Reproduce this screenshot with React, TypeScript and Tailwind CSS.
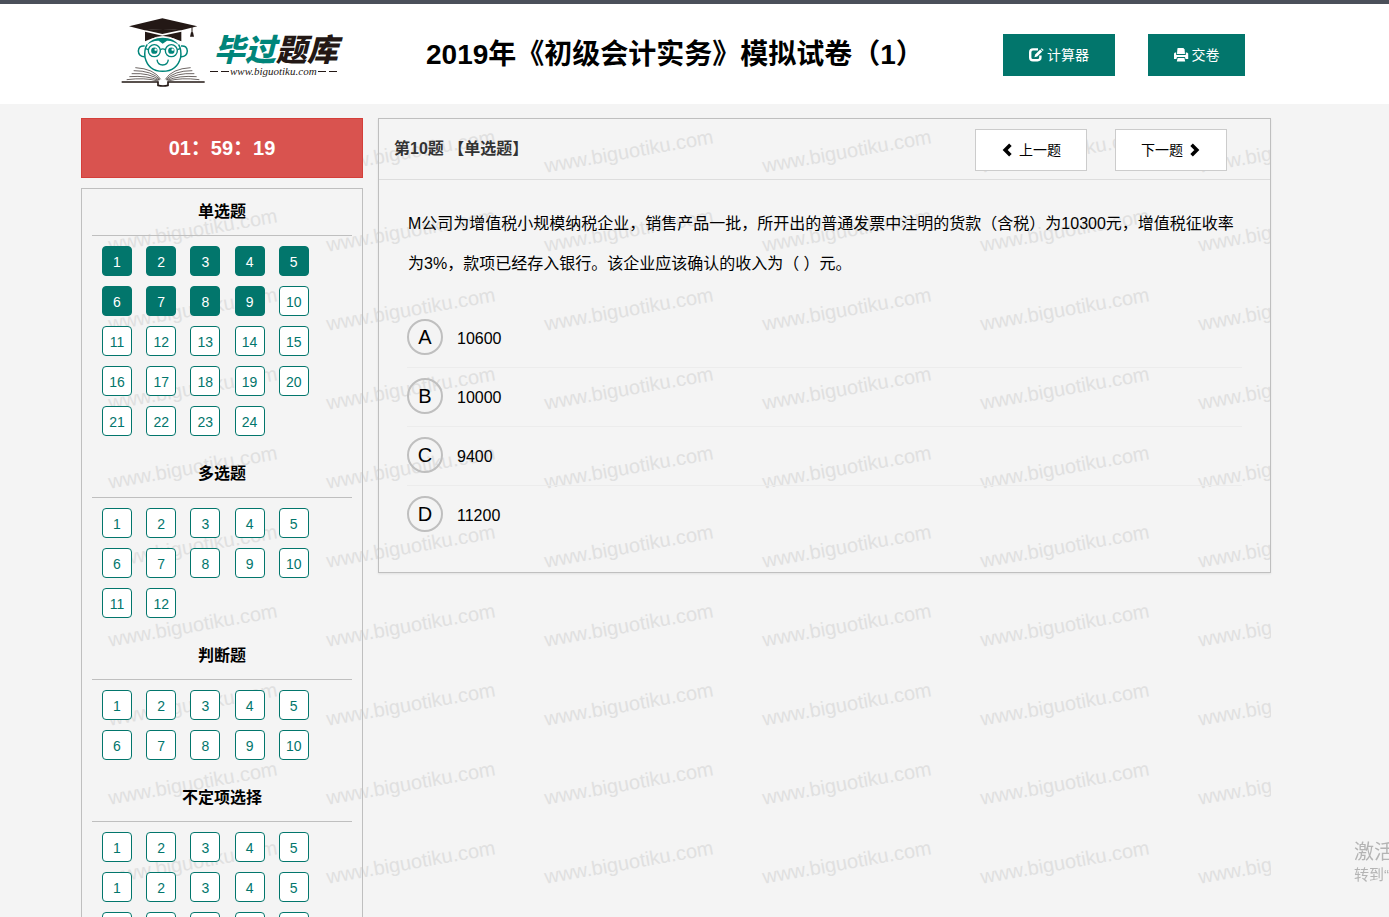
import React from "react";

type Section = { title: string; items: number[]; done: number };

const range = (n: number) => Array.from({ length: n }, (_, i) => i + 1);

const sections: Section[] = [
  { title: "单选题", items: range(24), done: 9 },
  { title: "多选题", items: range(12), done: 0 },
  { title: "判断题", items: range(10), done: 0 },
  { title: "不定项选择", items: [...range(5), ...range(5), ...range(5)], done: 0 },
];

const options = [
  { key: "A", text: "10600" },
  { key: "B", text: "10000" },
  { key: "C", text: "9400" },
  { key: "D", text: "11200" },
];

function Mascot() {
  return (
    <svg viewBox="30 51 258 213" className="h-[71px] w-[86px] shrink-0" fill="none" aria-hidden="true">
      <path d="M105 95 L157 107 L214 95 V124 Q186 110 158 110 Q130 110 105 124 Z" fill="#231815" />
      <path d="M122 119 Q158 100 197 119" stroke="#fff" strokeWidth="3" />
      <path d="M57 79 L157 55 L262 79 L214 91 Q158 84 104 91 Z" fill="#231815" />
      <path d="M104 90 Q158 84 214 90 L157 102 Z" fill="#231815" />
      <path d="M246 80 V99" stroke="#231815" strokeWidth="3" />
      <path d="M243 97 H249 L252 110 H240 Z" fill="#231815" />
      <path d="M111 134 Q102 150 105 172 Q115 214 158 214 Q201 214 212 172 Q215 150 206 134" stroke="#00857a" strokeWidth="4.5" />
      <path d="M108 137 Q124 113 158 113 Q192 113 209 137 Q188 121 171 122 L158 131 L146 122 Q127 121 108 137 Z" fill="#00857a" />
      <path d="M104 138 Q86 136 85 153 Q86 170 104 170 M213 138 Q231 136 232 153 Q231 170 213 170" stroke="#00857a" strokeWidth="4.5" />
      <circle cx="133" cy="152" r="18" stroke="#00857a" strokeWidth="4" />
      <circle cx="184" cy="152" r="18" stroke="#00857a" strokeWidth="4" />
      <path d="M151 149 Q158 144 166 149 M115 149 L105 145 M202 149 L212 145" stroke="#00857a" strokeWidth="4" />
      <circle cx="133" cy="152" r="9.5" fill="#00857a" />
      <circle cx="184" cy="152" r="9.5" fill="#00857a" />
      <circle cx="137" cy="149" r="3.5" fill="#fff" />
      <circle cx="188" cy="149" r="3.5" fill="#fff" />
      <path d="M141 179 Q143 195 158 195 Q173 195 175 179" stroke="#00857a" strokeWidth="4" />
      <g stroke="#231815" strokeWidth="2">
        <path d="M76 203 Q132 206 152 238" />
        <path d="M71 212 Q126 212 150 239" />
        <path d="M65 221 Q120 218 148 240" />
        <path d="M58 230 Q112 226 146 241" />
        <path d="M50 239 Q105 232 144 243" />
        <path d="M242 203 Q186 206 166 238" />
        <path d="M247 212 Q192 212 168 239" />
        <path d="M253 221 Q198 218 170 240" />
        <path d="M260 230 Q206 226 172 241" />
        <path d="M268 239 Q213 232 174 243" />
      </g>
      <path d="M35 246 H144 V256 Q159 260 174 256 V246 H284" stroke="#231815" strokeWidth="5" />
    </svg>
  );
}

function Logo() {
  return (
    <a href="#" aria-label="毕过题库" className="flex w-[222px] shrink-0 items-start gap-1">
      <Mascot />
      <span className="flex flex-col items-start pt-4">
        <span className="pl-1 text-[31px] leading-9 font-black whitespace-nowrap text-[#231815] italic">
          <span className="text-[#00857a]">毕过</span>题库
        </span>
        <span className="-mt-1 flex items-center gap-px font-['Liberation_Serif','Noto_Sans_CJK_SC',serif] text-[11px] leading-3 text-[#231815] italic">
          <span className="h-px w-2 bg-[#231815]" />
          <span className="ml-0.5 h-px w-2 bg-[#231815]" />
          www.biguotiku.com
          <span className="h-px w-2 bg-[#231815]" />
          <span className="ml-0.5 h-px w-2 bg-[#231815]" />
        </span>
      </span>
    </a>
  );
}

function EditIcon() {
  return (
    <svg viewBox="0 0 14 14" className="size-3.5 overflow-visible" fill="none" aria-hidden="true">
      <path d="M9 1.4 H4 Q1.2 1.4 1.2 4.2 V9.4 Q1.2 12.2 4 12.2 H8.6 Q11.4 12.2 11.4 9.4 V7.6" stroke="currentColor" strokeWidth="2.4" />
      <path d="M5.4 9.3 L6.2 6.5 L11.2 1.5 L13.2 3.5 L8.2 8.5 Z" fill="currentColor" />
      <path d="M11.8 0.9 L12.6 0.2 L14.6 2 L13.8 2.9 Z" fill="currentColor" />
    </svg>
  );
}

function PrintIcon() {
  return (
    <svg viewBox="0 0 14 14" className="size-3.5 overflow-visible" fill="none" aria-hidden="true">
      <path d="M4 0 H9.4 L10.6 1.5 L11 6 H3 L3.4 0.6 Z" fill="currentColor" />
      <path d="M0 5.4 L1 4.6 H2.2 V7 H11.8 V4.6 H13 L14.2 5.4 V11 H11.6 L11 9 H3 L2.4 11 H0 Z" fill="currentColor" />
      <path d="M3.6 10 H10.4 L11.2 13.4 H2.8 Z" fill="currentColor" />
    </svg>
  );
}

function Chevron({ dir }: { dir: "left" | "right" }) {
  return (
    <svg viewBox="0 0 14 14" className="size-3.5" fill="none" aria-hidden="true">
      <path
        d={dir === "left" ? "M9.4 1.8 L4.2 7 L9.4 12.2" : "M4.6 1.8 L9.8 7 L4.6 12.2"}
        stroke="currentColor"
        strokeWidth="3.6"
      />
    </svg>
  );
}

function Watermarks() {
  return (
    <div aria-hidden="true" className="pointer-events-none absolute inset-0 overflow-hidden">
      <div className="grid w-[1308px] auto-rows-[79px] grid-cols-6">
        {range(66).map((n) => (
          <span
            key={n}
            className="origin-bottom-left -rotate-10 self-end pl-[30px] text-[20px] leading-6 whitespace-nowrap text-[#e0e0e0]"
          >
            www.biguotiku.com
          </span>
        ))}
      </div>
    </div>
  );
}

export default function App() {
  return (
    <div className="min-h-screen overflow-hidden bg-[#f4f4f4] font-['Liberation_Sans','Noto_Sans_CJK_SC',sans-serif] text-black">
      <header className="border-t-4 border-[#4b505a] bg-white">
        <div className="flex h-[100px] items-start pr-36 pl-[120px] pt-[13px]">
          <Logo />
          <h1 className="min-w-0 flex-1 pt-[17px] pl-[84px] text-[28px] leading-[42px] font-bold whitespace-nowrap">
            2019年《初级会计实务》模拟试卷（1）
          </h1>
          <div className="flex shrink-0 gap-[33px] pt-[17px]">
            <button className="flex h-[42px] w-28 items-center justify-center gap-1 bg-[#02766c] text-[14px] text-white">
              <EditIcon />
              计算器
            </button>
            <button className="flex h-[42px] w-[97px] items-center justify-center gap-1 bg-[#02766c] text-[14px] text-white">
              <PrintIcon />
              交卷
            </button>
          </div>
        </div>
      </header>

      <div className="pr-[118px] pl-[81px]">
        <main className="relative">
          <Watermarks />
          <div className="relative flex items-start gap-[15px] pt-3.5">
            <aside className="flex w-[282px] shrink-0 flex-col gap-2.5">
              <div className="flex h-[60px] items-center justify-center border border-[#d43f3a] bg-[#d9534f] text-[20px] font-bold text-white">
                01：59：19
              </div>
              <nav className="border border-[#bfbfbf] px-2.5 pb-10">
                {sections.map((s) => (
                  <section key={s.title} className="pb-[5px]">
                    <h2 className="border-b border-[#bfbfbf] text-center text-[16px] leading-[46px] font-bold">{s.title}</h2>
                    <ul className="flex flex-wrap pt-2.5">
                      {s.items.map((n, i) => (
                        <li key={i} className="mb-2.5 w-[17%] pl-2.5">
                          <button
                            className={
                              i < s.done
                                ? "block size-[30px] rounded-[4px] border border-[#02766c] bg-[#02766c] pt-0.5 text-[14px] text-white"
                                : "block size-[30px] rounded-[4px] border border-[#02766c] bg-white pt-0.5 text-[14px] text-[#02766c]"
                            }
                          >
                            {n}
                          </button>
                        </li>
                      ))}
                    </ul>
                  </section>
                ))}
              </nav>
            </aside>

            <section className="min-w-0 flex-1 border border-[#bfbfbf] shadow-[0_1px_2px_rgba(0,0,0,0.08)]">
              <div className="flex items-start justify-between border-b border-[#ddd] pt-2.5 pb-2 pr-[43px] pl-[15px]">
                <h2 className="text-[16px] leading-10 font-bold text-[#333]">第10题 【单选题】</h2>
                <div className="flex gap-7">
                  <button className="flex h-[42px] w-28 items-center justify-center gap-1 border border-[#ccc] bg-white text-[14px]">
                    <Chevron dir="left" />
                    上一题
                  </button>
                  <button className="flex h-[42px] w-28 items-center justify-center gap-1 border border-[#ccc] bg-white text-[14px]">
                    下一题
                    <Chevron dir="right" />
                  </button>
                </div>
              </div>
              <div className="px-7 pt-6 pb-7">
                <p className="pr-1 pl-px text-[16px] leading-10">
                  M公司为增值税小规模纳税企业，销售产品一批，所开出的普通发票中注明的货款（含税）为10300元，增值税征收率为3%，款项已经存入银行。该企业应该确认的收入为（ ）元。
                </p>
                <ul className="pt-[25px]">
                  {options.map((o) => (
                    <li key={o.key} className="border-b border-[#ececec] last:border-b-0">
                      <button className="flex h-[58px] w-full items-center gap-3.5 pb-0.5 text-left text-[16px]">
                        <span className="flex size-9 items-center justify-center rounded-full border-2 border-[#bfbfbf] text-[20px]">
                          {o.key}
                        </span>
                        <span className="pt-1">{o.text}</span>
                      </button>
                    </li>
                  ))}
                </ul>
              </div>
            </section>
          </div>
        </main>
      </div>

      <div className="fixed right-0 bottom-8 w-[35px] overflow-hidden whitespace-nowrap text-[#b4b4b4]">
        <p className="text-[20px] leading-[26px]">激活</p>
        <p className="text-[15px] leading-5">转到“</p>
      </div>
    </div>
  );
}
